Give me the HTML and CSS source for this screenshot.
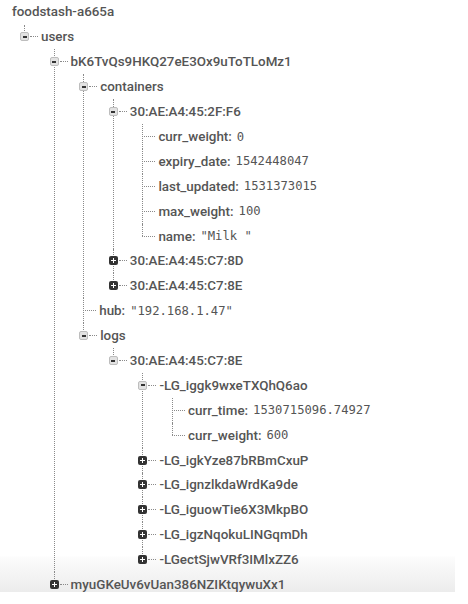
FILE: index.html
```html
<!DOCTYPE html>
<html>
<head>
<meta charset="utf-8">
<link rel="stylesheet" href="styles.css">
</head>
<body>
<div class="viewer">
  <div class="root-label">foodstash-a665a</div>
  <ul class="tree">
    <li>
      <div class="row"><span class="tog open"></span><span class="conn"></span><span class="key">users</span></div>
      <ul>
        <li>
          <div class="row"><span class="tog open"></span><span class="conn"></span><span class="key">bK6TvQs9HKQ27eE3Ox9uToTLoMz1</span></div>
          <ul>
            <li>
              <div class="row"><span class="tog open"></span><span class="conn"></span><span class="key">containers</span></div>
              <ul>
                <li>
                  <div class="row"><span class="tog open"></span><span class="conn"></span><span class="key">30:AE:A4:45:2F:F6</span></div>
                  <ul>
                    <li class="leaf"><div class="row"><span class="conn"></span><span class="key">curr_weight:</span><span class="val">0</span></div></li>
                    <li class="leaf"><div class="row"><span class="conn"></span><span class="key">expiry_date:</span><span class="val">1542448047</span></div></li>
                    <li class="leaf"><div class="row"><span class="conn"></span><span class="key">last_updated:</span><span class="val">1531373015</span></div></li>
                    <li class="leaf"><div class="row"><span class="conn"></span><span class="key">max_weight:</span><span class="val">100</span></div></li>
                    <li class="leaf"><div class="row"><span class="conn"></span><span class="key">name:</span><span class="val">"Milk "</span></div></li>
                  </ul>
                </li>
                <li><div class="row"><span class="tog closed"></span><span class="conn"></span><span class="key">30:AE:A4:45:C7:8D</span></div></li>
                <li><div class="row"><span class="tog closed"></span><span class="conn"></span><span class="key">30:AE:A4:45:C7:8E</span></div></li>
              </ul>
            </li>
            <li class="leaf"><div class="row"><span class="conn"></span><span class="key">hub:</span><span class="val">"192.168.1.47"</span></div></li>
            <li>
              <div class="row"><span class="tog open"></span><span class="conn"></span><span class="key">logs</span></div>
              <ul>
                <li>
                  <div class="row"><span class="tog open"></span><span class="conn"></span><span class="key">30:AE:A4:45:C7:8E</span></div>
                  <ul>
                    <li>
                      <div class="row"><span class="tog open"></span><span class="conn"></span><span class="key">-LG_iggk9wxeTXQhQ6ao</span></div>
                      <ul>
                        <li class="leaf"><div class="row"><span class="conn"></span><span class="key">curr_time:</span><span class="val">1530715096.74927</span></div></li>
                        <li class="leaf"><div class="row"><span class="conn"></span><span class="key">curr_weight:</span><span class="val">600</span></div></li>
                      </ul>
                    </li>
                    <li><div class="row"><span class="tog closed"></span><span class="conn"></span><span class="key">-LG_igkYze87bRBmCxuP</span></div></li>
                    <li><div class="row"><span class="tog closed"></span><span class="conn"></span><span class="key">-LG_ignzlkdaWrdKa9de</span></div></li>
                    <li><div class="row"><span class="tog closed"></span><span class="conn"></span><span class="key">-LG_iguowTie6X3MkpBO</span></div></li>
                    <li><div class="row"><span class="tog closed"></span><span class="conn"></span><span class="key">-LG_igzNqokuLINGqmDh</span></div></li>
                    <li><div class="row"><span class="tog closed"></span><span class="conn"></span><span class="key">-LGectSjwVRf3IMlxZZ6</span></div></li>
                  </ul>
                </li>
              </ul>
            </li>
          </ul>
        </li>
        <li><div class="row"><span class="tog closed"></span><span class="conn"></span><span class="key">myuGKeUv6vUan386NZIKtqywuXx1</span></div></li>
      </ul>
    </li>
  </ul>
</div>
</body>
</html>
```
FILE: styles.css
```css
html, body {
  margin: 0;
  padding: 0;
  background: #fff;
}

.viewer {
  width: 455px;
  box-sizing: border-box;
  padding-left: 12px;
  font-family: Roboto, "Noto Sans", sans-serif;
  font-size: 13.4px;
  font-weight: 500;
  color: #555;
  background: linear-gradient(to bottom, #fff 0, #fff 556px, #fcfcfc 557px, #ececec 592px, #fff 592px, #fff 100%);
}

.root-label {
  height: 24.5px;
  line-height: 24.5px;
}

.tree,
.tree ul {
  list-style: none;
  margin: 0;
  padding: 0;
}

.tree {
  margin-left: 8px;
}

.tree ul {
  margin-left: 29.6px;
}

.tree li {
  position: relative;
}

.tree li::before {
  content: "";
  position: absolute;
  left: 4px;
  top: 0;
  bottom: 0;
  border-left: 1px dotted #8a8a8a;
}

.tree li:last-child::before {
  bottom: auto;
  height: 12.5px;
}

.row {
  display: flex;
  align-items: center;
  height: 24.9px;
  white-space: pre;
}

.tog {
  position: relative;
  z-index: 1;
  flex: none;
  width: 9px;
  height: 9px;
  box-sizing: border-box;
  border-radius: 2px;
}

.tog.open {
  background: #e2e2e2;
  border: 1px solid #bdbdbd;
}

.tog.open::after {
  content: "";
  position: absolute;
  left: 1.5px;
  top: 2.5px;
  width: 4px;
  height: 2px;
  background: #333;
}

.tog.closed {
  background: #333;
}

.tog.closed::before,
.tog.closed::after {
  content: "";
  position: absolute;
  background: #fff;
}

.tog.closed::before {
  left: 2px;
  top: 4px;
  width: 5px;
  height: 1px;
}

.tog.closed::after {
  left: 4px;
  top: 2px;
  width: 1px;
  height: 5px;
}

.conn {
  flex: none;
  width: 8px;
  margin: 0 3px 0 1px;
  border-top: 1px dotted #8a8a8a;
}

.leaf .conn {
  width: 13px;
  margin-left: 4px;
}

.val {
  font-family: "DejaVu Sans Mono", "Liberation Mono", monospace;
  font-weight: 400;
  font-size: 12.2px;
  margin-left: 5px;
}
```
